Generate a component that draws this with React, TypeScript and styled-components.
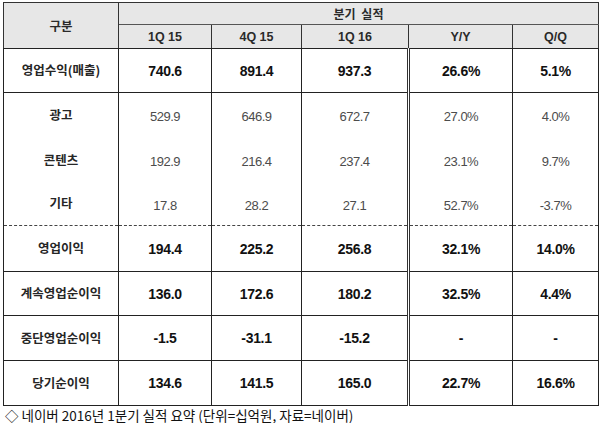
import React from 'react'
import styled, { createGlobalStyle } from 'styled-components'

const GlobalStyle = createGlobalStyle`
  html, body {
    margin: 0;
    padding: 0;
    background: #ffffff;
  }
`

const Page = styled.div`
  padding: 2px 2px 0 3px;
  width: 600px;
  box-sizing: border-box;
`

const Table = styled.table`
  border-collapse: collapse;
  table-layout: fixed;
  width: 595px;
  border: 1px solid #222;
`

const HeadCell = styled.th<{ $first?: boolean }>`
  background: #e7e7e7;
  font-family: ${(p) => (p.$first ? '"Noto Sans CJK KR", sans-serif' : '"Liberation Sans", Arial, sans-serif')};
  font-size: ${(p) => (p.$first ? '12.5px' : '12.5px')};
  font-weight: 700;
  color: #2a2a2a;
  text-align: center;
  vertical-align: middle;
  padding: 0;
  border: 1px solid #333;
  border-bottom: 1px solid #222;
`

const GroupCell = styled.th`
  background: #e7e7e7;
  font-family: 'Noto Sans CJK KR', sans-serif;
  font-size: 12px;
  font-weight: 700;
  color: #2a2a2a;
  text-align: center;
  padding: 0;
  border: 1px solid #333;
  border-bottom: 1px solid #555;
  word-spacing: 3px;
`

const Row = styled.tr<{ $h: number; $dashed?: boolean; $sub?: boolean }>`
  height: ${(p) => p.$h}px;
  & > td {
    border-top: ${(p) => (p.$dashed ? '1px dashed #444' : p.$sub ? 'none' : '1px solid #222')};
    border-bottom: ${(p) => (p.$sub ? 'none' : '1px solid #222')};
  }
`

const Label = styled.td`
  font-family: 'Noto Sans CJK KR', sans-serif;
  font-size: 12.5px;
  font-weight: 700;
  color: #262626;
  text-align: center;
  vertical-align: middle;
  padding: 0 0 2px;
  border-left: 1px solid #222;
  border-right: 1px solid #222;
  white-space: nowrap;
`

const Value = styled.td<{ $bold?: boolean; $double?: boolean }>`
  font-family: 'Liberation Sans', Arial, sans-serif;
  font-size: ${(p) => (p.$bold ? '14px' : '13px')};
  font-weight: ${(p) => (p.$bold ? 700 : 400)};
  letter-spacing: ${(p) => (p.$bold ? '-0.3px' : '-0.5px')};
  color: ${(p) => (p.$bold ? '#111' : '#4c4c4c')};
  text-align: center;
  vertical-align: middle;
  padding: ${(p) => (p.$bold ? '0' : '3px 0 0')};
  border-left: ${(p) => (p.$double ? '3px double #333' : '1px solid #222')};
  border-right: 1px solid #222;
`

const Caption = styled.div`
  font-family: 'Noto Sans CJK KR', sans-serif;
  font-size: 13.5px;
  line-height: 16px;
  color: #111;
  margin: 1px 0 0 2px;
  white-space: nowrap;
`

type Line = {
  label: string
  values: string[]
  h: number
  bold?: boolean
  sub?: boolean
  dashed?: boolean
}

const lines: Line[] = [
  { label: '영업수익(매출)', values: ['740.6', '891.4', '937.3', '26.6%', '5.1%'], h: 44, bold: true },
  { label: '광고', values: ['529.9', '646.9', '672.7', '27.0%', '4.0%'], h: 45, sub: true },
  { label: '콘텐츠', values: ['192.9', '216.4', '237.4', '23.1%', '9.7%'], h: 45, sub: true },
  { label: '기타', values: ['17.8', '28.2', '27.1', '52.7%', '-3.7%'], h: 43, sub: true },
  { label: '영업이익', values: ['194.4', '225.2', '256.8', '32.1%', '14.0%'], h: 46, bold: true, dashed: true },
  { label: '계속영업순이익', values: ['136.0', '172.6', '180.2', '32.5%', '4.4%'], h: 44, bold: true },
  { label: '중단영업순이익', values: ['-1.5', '-31.1', '-15.2', '-', '-'], h: 45, bold: true },
  { label: '당기순이익', values: ['134.6', '141.5', '165.0', '22.7%', '16.6%'], h: 45, bold: true },
]

const colWidths = [115, 93, 90, 107, 104, 86]
const quarters = ['1Q 15', '4Q 15', '1Q 16', 'Y/Y', 'Q/Q']

export default function App() {
  return (
    <Page>
      <GlobalStyle />
      <Table>
        <colgroup>
          {colWidths.map((w, i) => (
            <col key={i} style={{ width: w }} />
          ))}
        </colgroup>
        <thead>
          <tr style={{ height: 22 }}>
            <HeadCell $first rowSpan={2}>
              구분
            </HeadCell>
            <GroupCell colSpan={5}>분기 실적</GroupCell>
          </tr>
          <tr style={{ height: 24 }}>
            {quarters.map((q) => (
              <HeadCell key={q}>{q}</HeadCell>
            ))}
          </tr>
        </thead>
        <tbody>
          {lines.map((l) => (
            <Row key={l.label} $h={l.h} $dashed={l.dashed} $sub={l.sub}>
              <Label>{l.label}</Label>
              {l.values.map((v, i) => (
                <Value key={i} $bold={l.bold} $double={i === 3}>
                  {v}
                </Value>
              ))}
            </Row>
          ))}
        </tbody>
      </Table>
      <Caption>◇ 네이버 2016년 1분기 실적 요약 (단위=십억원, 자료=네이버)</Caption>
    </Page>
  )
}
